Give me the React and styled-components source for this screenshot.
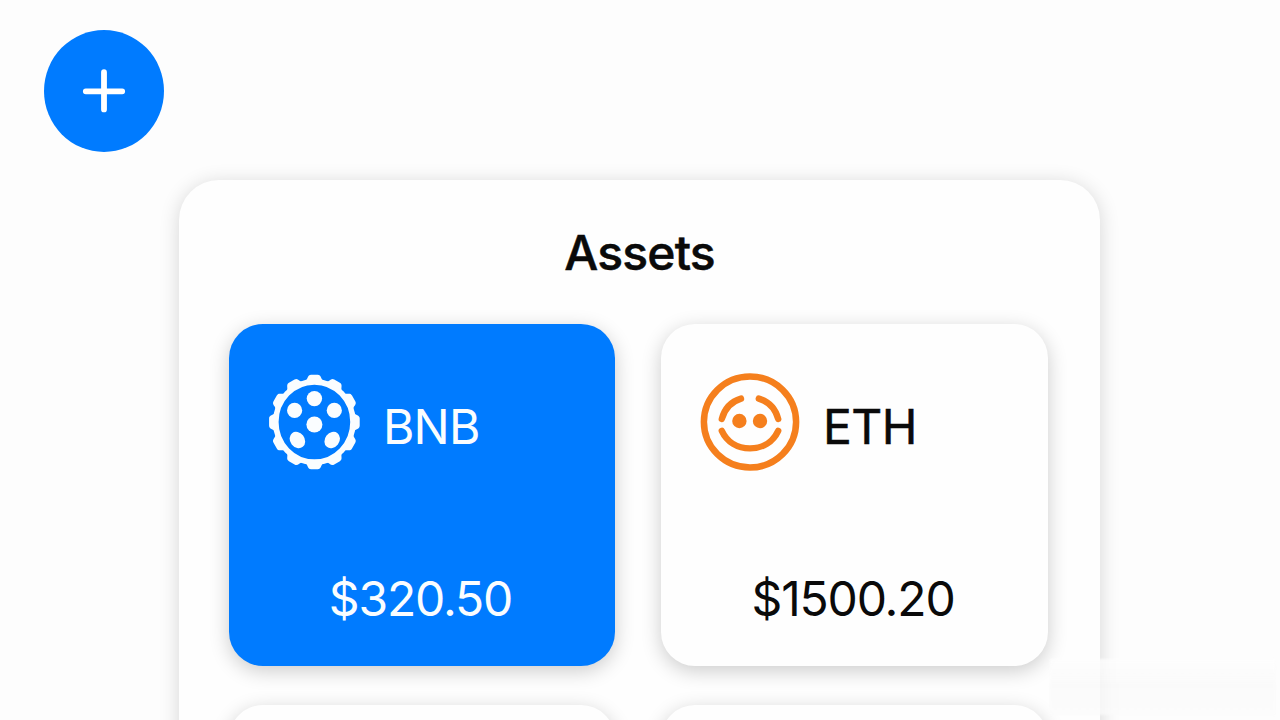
import React from 'react';
import styled, { createGlobalStyle } from 'styled-components';

const GlobalStyle = createGlobalStyle`
  * {
    box-sizing: border-box;
  }
  body {
    margin: 0;
    background-color: #fdfdfd;
    overflow: hidden;
  }
`;

const Page = styled.div`
  width: 100%;
  height: 720px;
  padding: 30px 44px 0;
  display: flex;
  flex-direction: column;
  overflow: hidden;
  position: relative;
  font-family: Inter, 'Liberation Sans', sans-serif;
  color: #0a0a0a;
`;

const AddButton = styled.button`
  width: 120px;
  height: 122px;
  padding: 0;
  border: none;
  border-radius: 50%;
  flex-shrink: 0;
  display: flex;
  align-items: center;
  justify-content: center;
  background-color: #007bff;
  cursor: pointer;
`;

const Panel = styled.main`
  width: 921px;
  height: 760px;
  flex-shrink: 0;
  margin: 28px 0 0 135px;
  padding: 43px 52px 0 50px;
  border-radius: 40px;
  background-color: #fefefe;
  box-shadow: 0 3px 20px rgba(0, 0, 0, 0.16);
`;

const Title = styled.h1`
  margin: 0;
  height: 101px;
  padding-left: 2px;
  font-size: 48px;
  font-weight: 500;
  line-height: 60px;
  letter-spacing: -0.8px;
  text-align: center;
  -webkit-text-stroke: 0.5px currentColor;
`;

const Grid = styled.div`
  display: grid;
  grid-template-columns: 386px 387px;
  grid-auto-rows: 342px;
  gap: 39px 46px;
`;

const Card = styled.section`
  padding: 47px 39px 0;
  border-radius: 34px;
  display: flex;
  flex-direction: column;
  color: ${(props) => (props.$active ? '#fafdff' : '#0a0a0a')};
  background-color: ${(props) => (props.$active ? '#007bff' : '#fefefe')};
  box-shadow: 0 5px 20px rgba(0, 0, 0, 0.2);
`;

const Coin = styled.div`
  height: 102px;
  display: flex;
  align-items: center;
`;

const Symbol = styled.span`
  margin: 10px 0 0 ${(props) => props.$gap}px;
  font-size: 48px;
  line-height: 58px;
  letter-spacing: ${(props) => props.$tracking}px;
  -webkit-text-stroke: ${(props) => props.$stroke || 0}px currentColor;
`;

const Price = styled.div`
  margin-top: 97px;
  padding-right: 3px;
  font-size: 48px;
  line-height: 58px;
  text-align: center;
  letter-spacing: -1.15px;
`;

// frosted strip in the lower corner
const Smudge = styled.div`
  position: absolute;
  left: 1050px;
  top: 659px;
  width: 225px;
  height: 56px;
  background: linear-gradient(rgba(254, 254, 254, 0.8), rgba(249, 249, 249, 0.75) 45%, rgba(251, 251, 251, 0.75));
  filter: blur(1px);
`;

const PlusIcon = () => (
  <svg width="44" height="44" viewBox="0 0 44 44" fill="none" stroke="#fff" strokeWidth="5.8" strokeLinecap="round">
    <path d="M22 3.2V40.4M3.8 22.3H40.2" />
  </svg>
);

const TEETH = Array.from({ length: 12 }, (_, i) => i * 30);

const BnbIcon = () => (
  <svg width="92" height="96" viewBox="-46.4 -48 92 96" fill="currentColor">
    <g transform="scale(0.96 1)">
      <circle r="40.2" fill="none" stroke="currentColor" strokeWidth="5.8" />
      {TEETH.map((angle) => (
        <path
          key={angle}
          transform={`rotate(${angle})`}
          d="M-9.5 -41C-6.5 -42.8 -7.4 -47.2 -3.4 -47.2H3.4C7.4 -47.2 6.5 -42.8 9.5 -41Z"
        />
      ))}
    </g>
    <circle cx="0" cy="-23.4" r="7.7" />
    <circle cx="-19.8" cy="-11.6" r="7.6" />
    <circle cx="19.9" cy="-11.6" r="7.6" />
    <circle cx="0" cy="2.5" r="8" />
    <ellipse cx="-17" cy="18" rx="7.2" ry="8.7" transform="rotate(-38 -17 18)" />
    <ellipse cx="17.8" cy="18" rx="7.2" ry="8.7" transform="rotate(38 17.8 18)" />
  </svg>
);

const EthIcon = () => (
  <svg width="100" height="98" viewBox="0 0 100 98" fill="none" stroke="#f57f1d" strokeLinecap="round">
    <ellipse cx="50" cy="49" rx="46.1" ry="45.5" strokeWidth="6.5" />
    <g strokeWidth="6.4">
      <path d="M21.8 46C24.4 36.2 31 28.6 41 25.6" />
      <path d="M58.8 25.6C68.6 28.6 75.6 36.2 78.2 46" />
      <path d="M21.8 57.8C27 69 37.5 75.4 50 75.4S73 69 78.2 57.8" />
    </g>
    <g fill="#f57f1d" stroke="none">
      <circle cx="39.4" cy="48" r="7.2" />
      <circle cx="60" cy="48" r="7.2" />
    </g>
  </svg>
);

const App = () => (
  <>
    <GlobalStyle />
    <Page>
      <AddButton aria-label="Add">
        <PlusIcon />
      </AddButton>
      <Panel>
        <Title>Assets</Title>
        <Grid>
          <Card $active>
            <Coin>
              <BnbIcon />
              <Symbol $gap={23} $tracking={-0.8}>BNB</Symbol>
            </Coin>
            <Price>$320.50</Price>
          </Card>
          <Card>
            <Coin>
              <EthIcon />
              <Symbol $gap={23} $tracking={-0.5} $stroke={0.5}>ETH</Symbol>
            </Coin>
            <Price>$1500.20</Price>
          </Card>
          <Card />
          <Card />
        </Grid>
      </Panel>
      <Smudge />
    </Page>
  </>
);

export default App;
